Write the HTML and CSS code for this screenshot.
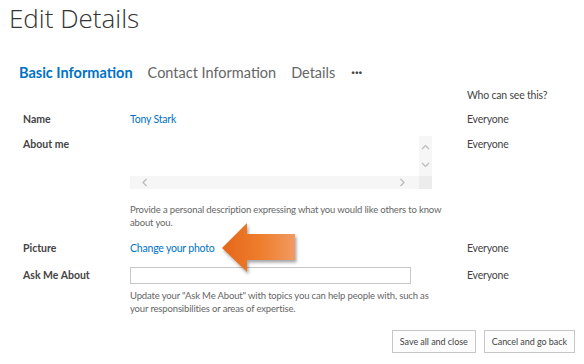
FILE: index.html
```html
<!DOCTYPE html>
<html lang="en">
<head>
  <meta charset="UTF-8" />
  <title>Edit Details</title>
  <link rel="stylesheet" href="styles.css">
</head>
<body>

  <h1 class="title">Edit Details</h1>

  <nav class="tabs">
    <a href="#" class="tab active">Basic Information</a>
    <a href="#" class="tab">Contact Information</a>
    <a href="#" class="tab">Details</a>
    <span class="more">&middot;&middot;&middot;</span>
  </nav>

  <div class="form">
    <div class="row head">
      <div></div>
      <div></div>
      <div class="who">Who can see this?</div>
    </div>

    <div class="row name-row">
      <div class="label">Name</div>
      <div class="value"><a href="#">Tony Stark</a></div>
      <div class="who">Everyone</div>
    </div>

    <div class="row about-row">
      <div class="label">About me</div>
      <div class="value">
        <div class="textbox">
          <div class="text-area"></div>
          <div class="vbar">
            <svg width="13" height="40" viewBox="0 0 13 40"><polyline points="3,13 6.5,9.5 10,13" fill="none" stroke="#b9b9b9" stroke-width="1.2"/><polyline points="3,27 6.5,30.5 10,27" fill="none" stroke="#b9b9b9" stroke-width="1.2"/></svg>
          </div>
          <div class="hbar">
            <svg width="10" height="13" viewBox="0 0 10 13"><polyline points="6.5,3 3,6.5 6.5,10" fill="none" stroke="#b9b9b9" stroke-width="1.2"/></svg>
            <svg width="10" height="13" viewBox="0 0 10 13"><polyline points="3.5,3 7,6.5 3.5,10" fill="none" stroke="#b9b9b9" stroke-width="1.2"/></svg>
          </div>
          <div class="corner"></div>
        </div>
        <p class="hint">Provide a personal description expressing what you would like others to know about you.</p>
      </div>
      <div class="who">Everyone</div>
    </div>

    <div class="row picture-row">
      <div class="label">Picture</div>
      <div class="value"><a href="#">Change your photo</a></div>
      <div class="who">Everyone</div>
    </div>

    <div class="row ask-row">
      <div class="label">Ask Me About</div>
      <div class="value">
        <input type="text" class="ask-input">
        <p class="hint">Update your "Ask Me About" with topics you can help people with, such as your responsibilities or areas of expertise.</p>
      </div>
      <div class="who">Everyone</div>
    </div>
  </div>

  <div class="btn-group">
    <button type="button">Save all and close</button>
    <button type="button">Cancel and go back</button>
  </div>

  <!-- callout arrow pointing at the photo link -->
  <svg class="callout" width="86" height="60" viewBox="0 0 86 60">
    <defs>
      <linearGradient id="arrowFill" x1="0" y1="0" x2="1" y2="0">
        <stop offset="0" stop-color="#e5661a"/>
        <stop offset="0.55" stop-color="#ee7f2e"/>
        <stop offset="1" stop-color="#f19a62"/>
      </linearGradient>
      <filter id="arrowShadow" x="-20%" y="-20%" width="140%" height="150%">
        <feDropShadow dx="1.5" dy="2.5" stdDeviation="1.6" flood-color="#000" flood-opacity="0.35"/>
      </filter>
    </defs>
    <polygon points="4,29 29,4 29,15 77,15 77,41 29,41 29,53" fill="url(#arrowFill)" filter="url(#arrowShadow)"/>
  </svg>

</body>
</html>
```

FILE: styles.css
```css
* {
  box-sizing: border-box;
}

body {
  margin: 0;
  width: 584px;
  height: 364px;
  position: relative;
  background: #fff;
  font-family: 'Lato', sans-serif;
  color: #444;
  overflow: hidden;
}

.title {
  margin: 0;
  padding: 1px 0 0 9px;
  font-family: 'Open Sans', sans-serif;
  font-size: 26px;
  font-weight: 300;
  line-height: 34px;
  color: #333;
}

.tabs {
  display: flex;
  align-items: center;
  gap: 15px;
  margin-top: 27px;
  padding-left: 19px;
  height: 20px;
}

.tab {
  font-size: 14.5px;
  color: #666;
  text-decoration: none;
}

.tab.active {
  color: #0072c6;
  font-weight: 700;
}

.more {
  font-size: 13px;
  font-weight: 900;
  color: #444;
  margin-left: 1px;
}

.form {
  padding-left: 23px;
  margin-top: 6px;
}

.row {
  display: grid;
  grid-template-columns: 107px 337px 1fr;
  font-size: 10.5px;
  line-height: 14px;
  letter-spacing: -0.2px;
}

.label {
  font-weight: 700;
  letter-spacing: 0;
  color: #444;
}

.who {
  color: #444;
}

.value a {
  color: #0072c6;
  text-decoration: none;
}

.head {
  height: 24px;
}

.name-row {
  height: 25px;
}

.about-row {
  height: 104px;
}

.textbox {
  display: grid;
  grid-template-columns: 289px 13px;
  grid-template-rows: 40px 13px;
  width: 302px;
  margin-top: -1px;
}

.vbar {
  background: #f6f6f6;
}

.hbar {
  background: #f6f6f6;
  display: flex;
  justify-content: space-between;
  padding: 0 12px 0 10px;
}

.corner {
  background: #ececec;
}

.hint {
  margin: 14px 0 0;
  color: #666;
  font-size: 9.5px;
  letter-spacing: -0.15px;
  line-height: 13px;
  width: 320px;
}

.picture-row {
  height: 27px;
}

.ask-input {
  display: block;
  width: 281px;
  height: 17px;
  margin-top: -1px;
  border: 1px solid #c6c6c6;
  padding: 0 4px;
}

.ask-row .hint {
  margin-top: 5px;
  width: 306px;
}

.btn-group {
  display: flex;
  justify-content: flex-end;
  gap: 8px;
  padding-right: 9px;
  margin-top: 15px;
}

.btn-group button {
  height: 23px;
  padding: 0 7px;
  background: #fdfdfd;
  border: 1px solid #c6c6c6;
  font-family: 'Lato', sans-serif;
  font-size: 9px;
  letter-spacing: -0.05px;
  color: #444;
}

.callout {
  position: absolute;
  left: 218px;
  top: 219px;
}
```
